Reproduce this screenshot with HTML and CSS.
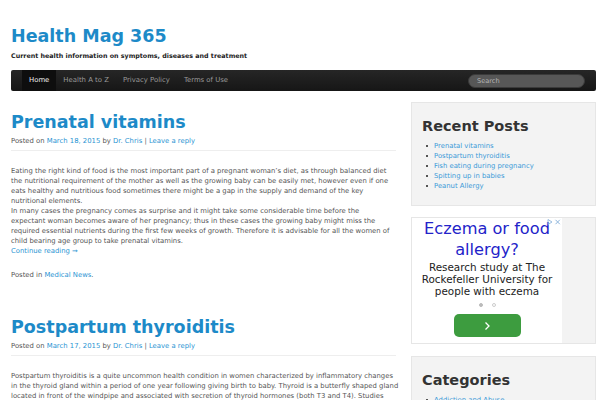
FILE: index.html
```html
<!DOCTYPE html>
<html lang="en">
<head>
    <meta charset="UTF-8">
    <meta name="viewport" content="width=device-width, initial-scale=1.0">
    <title>Health Mag 365</title>
    <link rel="stylesheet" href="styles.css">
</head>
<body>
    <div class="page">
        <header class="site-header">
            <h1 class="site-title"><a href="#">Health Mag 365</a></h1>
            <p class="site-description">Current health information on symptoms, diseases and treatment</p>

            <nav class="navbar">
                <ul class="menu">
                    <li class="current"><a href="#">Home</a></li>
                    <li><a href="#">Health A to Z</a></li>
                    <li><a href="#">Privacy Policy</a></li>
                    <li><a href="#">Terms of Use</a></li>
                </ul>
                <input class="search" type="text" placeholder="Search">
            </nav>
        </header>

        <div class="main">
            <div class="content">
                <article class="post">
                    <h2 class="entry-title"><a href="#">Prenatal vitamins</a></h2>
                    <div class="entry-meta">
                        Posted on <a href="#">March 18, 2015</a> by <a href="#">Dr. Chris</a> | <a href="#">Leave a reply</a>
                    </div>
                    <div class="entry-content">
                        <p>Eating the right kind of food is the most important part of a pregnant woman’s diet, as through balanced diet<br>
                        the nutritional requirement of the mother as well as the growing baby can be easily met, however even if one<br>
                        eats healthy and nutritious food sometimes there might be a gap in the supply and demand of the key<br>
                        nutritional elements.<br>
                        In many cases the pregnancy comes as surprise and it might take some considerable time before the<br>
                        expectant woman becomes aware of her pregnancy; thus in these cases the growing baby might miss the<br>
                        required essential nutrients during the first few weeks of growth. Therefore it is advisable for all the women of<br>
                        child bearing age group to take prenatal vitamins.<br>
                        <a href="#">Continue reading →</a></p>
                    </div>
                    <div class="entry-footer">
                        Posted in <a href="#">Medical News</a>.
                    </div>
                </article>

                <article class="post">
                    <h2 class="entry-title"><a href="#">Postpartum thyroiditis</a></h2>
                    <div class="entry-meta">
                        Posted on <a href="#">March 17, 2015</a> by <a href="#">Dr. Chris</a> | <a href="#">Leave a reply</a>
                    </div>
                    <div class="entry-content">
                        <p>Postpartum thyroiditis is a quite uncommon health condition in women characterized by inflammatory changes<br>
                        in the thyroid gland within a period of one year following giving birth to baby. Thyroid is a butterfly shaped gland<br>
                        located in front of the windpipe and associated with secretion of thyroid hormones (both T3 and T4). Studies<br>
                        have shown that the condition affects women in the first months after delivery.</p>
                    </div>
                </article>
            </div>

            <aside class="sidebar">
                <div class="widget">
                    <h3 class="widget-title">Recent Posts</h3>
                    <ul class="widget-list">
                        <li><a href="#">Prenatal vitamins</a></li>
                        <li><a href="#">Postpartum thyroiditis</a></li>
                        <li><a href="#">Fish eating during pregnancy</a></li>
                        <li><a href="#">Spitting up in babies</a></li>
                        <li><a href="#">Peanut Allergy</a></li>
                    </ul>
                </div>

                <div class="widget widget-ad">
                    <div class="ad">
                        <div class="ad-choices">
                            <svg width="14" height="6" viewBox="0 0 14 6">
                                <path d="M1 0.5 L5 3 L1 5.5 Z" fill="none" stroke="#8fb6dc" stroke-width="0.9"/>
                                <path d="M8.5 0.8 L12.8 5.2 M12.8 0.8 L8.5 5.2" stroke="#8fb6dc" stroke-width="1"/>
                            </svg>
                        </div>
                        <div class="ad-title">Eczema or food allergy?</div>
                        <div class="ad-text">Research study at The Rockefeller University for people with eczema</div>
                        <div class="ad-dots">
                            <span class="dot dot-on"></span>
                            <span class="dot"></span>
                        </div>
                        <a class="ad-button" href="#">
                            <svg width="8" height="10" viewBox="0 0 8 10">
                                <path d="M2.5 1.5 L6 5 L2.5 8.5" fill="none" stroke="white" stroke-width="1.3"/>
                            </svg>
                        </a>
                    </div>
                </div>

                <div class="widget">
                    <h3 class="widget-title">Categories</h3>
                    <ul class="widget-list">
                        <li><a href="#">Addiction and Abuse</a></li>
                        <li><a href="#">Allergies</a></li>
                        <li><a href="#">Medical News</a></li>
                    </ul>
                </div>
            </aside>
        </div>
    </div>
</body>
</html>
```

FILE: styles.css
```css
body {
    margin: 0;
    background-color: white;
    color: #555;
    font-family: "DejaVu Sans", Verdana, sans-serif;
    font-size: 6.85px;
    line-height: 10px;
    overflow: hidden;
}

a {
    color: #2b95d3;
    text-decoration: none;
}

.page {
    padding: 26px 4px 0 11px;
}

/* шапка */
.site-title {
    margin: 0;
    font-size: 17.5px;
    line-height: 20px;
    font-weight: bold;
}
.site-title a {
    color: #1d8ac8;
}

.site-description {
    margin: 5px 0 0;
    color: #222;
    font-size: 6.35px;
    line-height: 9px;
    font-weight: bold;
}

.navbar {
    margin-top: 10px;
    height: 21px;
    display: flex;
    align-items: center;
    justify-content: space-between;
    padding: 0 11px;
    background: linear-gradient(#262626, #161616);
    border-radius: 2px;
}

.menu {
    list-style: none;
    margin: 0;
    padding: 0;
    display: flex;
    height: 100%;
}
.menu a {
    display: block;
    padding: 0 7px;
    line-height: 21px;
    font-size: 6.9px;
    color: #9a9a9a;
}
.menu .current a {
    background-color: #0e0e0e;
    color: #eee;
}

.search {
    width: 117px;
    height: 14px;
    box-sizing: border-box;
    padding: 0 8px;
    border: 1px solid #3a3a3a;
    border-radius: 7px;
    background-color: #575757;
    font-family: "DejaVu Sans", sans-serif;
    font-size: 6.6px;
    color: #ccc;
}
.search::placeholder {
    color: #b5b5b5;
}

/* основная часть */
.main {
    display: flex;
    gap: 15px;
    margin-top: 11px;
}

.content {
    width: 385px;
}

.post + .post {
    margin-top: 36px;
}

.entry-title {
    margin: 9px 0 0;
    font-size: 17.5px;
    line-height: 22px;
    font-weight: bold;
}
.entry-title a {
    color: #1d8ac8;
}

.entry-meta {
    margin-top: 3px;
    padding-bottom: 4px;
    border-bottom: 1px solid #eee;
}

.entry-content p {
    margin: 15px 0 0;
    white-space: nowrap;
}

.entry-footer {
    margin-top: 14px;
}

/* сайдбар */
.sidebar {
    width: 185px;
}

.widget {
    background-color: #f3f3f3;
    border: 1px solid #e6e6e6;
    padding: 14px 10px 14px;
    margin-bottom: 11px;
}

.widget-title {
    margin: 0;
    color: #333;
    font-size: 14.5px;
    line-height: 18px;
    font-weight: bold;
}

.widget-list {
    list-style: none;
    margin: 6px 0 0;
    padding: 0;
}
.widget-list li {
    display: flex;
    align-items: center;
}
.widget-list li::before {
    content: "";
    width: 2px;
    height: 2px;
    margin: 0 6px 0 4px;
    background-color: #555;
}
.widget-list a {
    color: #3a9ad8;
}

/* реклама */
.widget-ad {
    padding: 0;
    margin-bottom: 12px;
}

.ad {
    position: relative;
    width: 150px;
    height: 125px;
    background-color: white;
    text-align: center;
}

.ad-choices {
    position: absolute;
    top: 1px;
    right: 1px;
    line-height: 0;
}

.ad-title {
    color: #2323c9;
    font-size: 16.2px;
    line-height: 21px;
}

.ad-text {
    margin-top: 1px;
    color: #222;
    font-size: 10.4px;
    line-height: 12px;
}

.ad-dots {
    display: flex;
    justify-content: center;
    gap: 9px;
    margin-top: 6px;
}
.dot {
    width: 4px;
    height: 4px;
    box-sizing: border-box;
    border-radius: 50%;
    border: 1px solid #ccc;
}
.dot-on {
    background-color: #bbb;
    border-color: #bbb;
}

.ad-button {
    display: flex;
    align-items: center;
    justify-content: center;
    width: 67px;
    height: 23px;
    margin: 7px auto 0;
    border-radius: 5px;
    background-color: #3d9c3f;
}
```
